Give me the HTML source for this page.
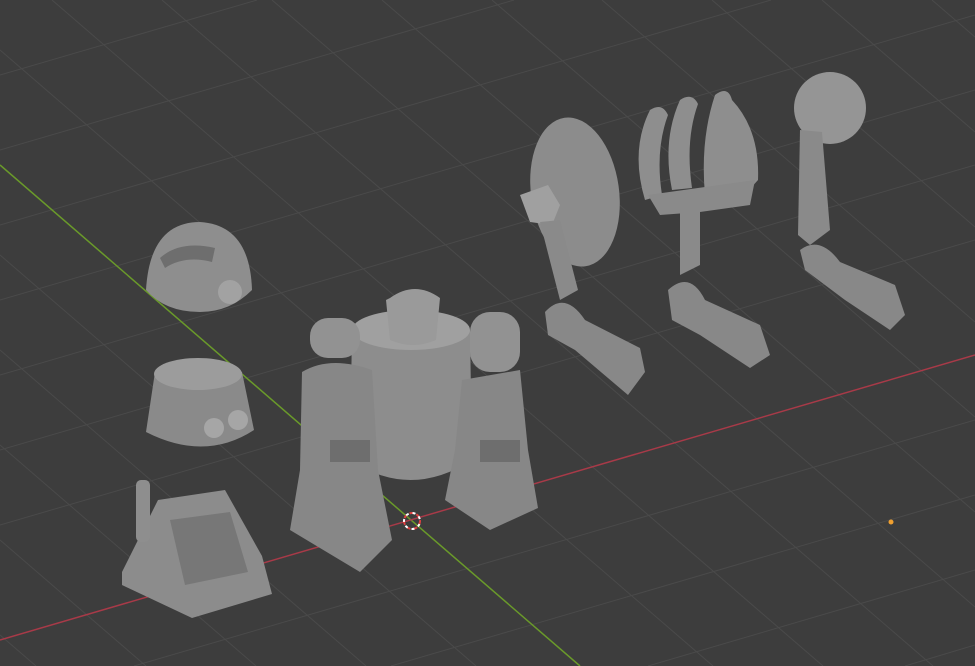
<!DOCTYPE html>
<html><head><meta charset="utf-8"><style>
html,body{margin:0;padding:0;background:#3d3d3d;overflow:hidden;width:975px;height:666px}
svg{display:block}
</style></head><body>
<svg width="975" height="666" viewBox="0 0 975 666" xmlns="http://www.w3.org/2000/svg">
<rect width="975" height="666" fill="#3d3d3d"/>
<g stroke="#4a4a4a" stroke-width="1">
<line x1="932" y1="0" x2="975" y2="37"/>
<line x1="822" y1="0" x2="975" y2="132"/>
<line x1="712" y1="0" x2="975" y2="227"/>
<line x1="602" y1="0" x2="975" y2="322"/>
<line x1="492" y1="0" x2="975" y2="417"/>
<line x1="382" y1="0" x2="975" y2="512"/>
<line x1="272" y1="0" x2="975" y2="607"/>
<line x1="162" y1="0" x2="933" y2="666"/>
<line x1="52" y1="0" x2="823" y2="666"/>
<line x1="0" y1="50" x2="713" y2="666"/>
<line x1="0" y1="255" x2="476" y2="666"/>
<line x1="0" y1="350" x2="366" y2="666"/>
<line x1="0" y1="445" x2="256" y2="666"/>
<line x1="0" y1="540" x2="146" y2="666"/>
<line x1="0" y1="635" x2="36" y2="666"/>
<line x1="0" y1="75" x2="257" y2="0"/>
<line x1="0" y1="150" x2="514" y2="0"/>
<line x1="0" y1="225" x2="771" y2="0"/>
<line x1="0" y1="300" x2="975" y2="15"/>
<line x1="0" y1="375" x2="975" y2="90"/>
<line x1="0" y1="450" x2="975" y2="165"/>
<line x1="0" y1="525" x2="975" y2="240"/>
<line x1="134" y1="666" x2="975" y2="420"/>
<line x1="391" y1="666" x2="975" y2="495"/>
<line x1="648" y1="666" x2="975" y2="570"/>
<line x1="905" y1="666" x2="975" y2="645"/>
</g>
<line x1="0" y1="165" x2="580" y2="666" stroke="#6a9a2a" stroke-width="1.5"/>
<line x1="0" y1="640" x2="975" y2="355" stroke="#a83a48" stroke-width="1.5"/>

<path d="M146 290 Q150 222 200 222 Q250 225 252 290 Q230 312 200 312 Q165 312 146 290Z" fill="#8e8e8e"/>
<path d="M160 258 Q180 240 215 248 L212 262 Q185 255 165 268Z" fill="#6e6e6e"/>
<circle cx="230" cy="292" r="12" fill="#a2a2a2"/>
<path d="M155 372 Q200 348 242 372 L254 430 Q205 462 146 432Z" fill="#8a8a8a"/>
<ellipse cx="198" cy="374" rx="44" ry="16" fill="#9c9c9c"/>
<circle cx="214" cy="428" r="10" fill="#a6a6a6"/>
<circle cx="238" cy="420" r="10" fill="#a6a6a6"/>
<path d="M122 572 L158 500 L225 490 L262 556 L272 594 L192 618 L122 585Z" fill="#8c8c8c"/>
<path d="M170 520 L230 512 L248 572 L185 585Z" fill="#777"/>
<rect x="136" y="480" width="14" height="62" rx="5" fill="#8e8e8e"/>
<path d="M352 330 Q410 300 470 330 L472 460 Q410 500 350 460Z" fill="#8d8d8d"/>
<ellipse cx="411" cy="330" rx="59" ry="20" fill="#a0a0a0"/>
<path d="M386 300 L390 298 Q415 280 440 298 L436 340 Q413 350 390 340Z" fill="#9a9a9a"/>
<rect x="310" y="318" width="50" height="40" rx="18" fill="#929292"/>
<rect x="470" y="312" width="50" height="60" rx="20" fill="#929292"/>
<path d="M302 372 Q330 355 372 370 L378 470 L392 540 L360 572 L290 530 L300 470Z" fill="#878787"/>
<path d="M462 380 L520 370 L528 450 L538 508 L490 530 L445 500 L455 450Z" fill="#878787"/>
<rect x="330" y="440" width="40" height="22" fill="#6e6e6e"/>
<rect x="480" y="440" width="40" height="22" fill="#6e6e6e"/>
<ellipse cx="575" cy="192" rx="44" ry="75" fill="#8c8c8c" transform="rotate(-8 575 192)"/>
<path d="M520 195 L548 185 L560 205 L552 225 L530 222Z" fill="#a0a0a0"/>
<path d="M540 222 L560 220 L578 290 L560 300Z" fill="#8a8a8a"/>
<path d="M545 312 Q565 290 585 320 L640 348 L645 372 L628 395 L575 350 L548 335Z" fill="#888"/>
<path d="M645 200 Q630 150 650 110 Q662 102 668 115 Q655 150 662 195Z" fill="#8e8e8e"/>
<path d="M672 190 Q662 140 680 100 Q692 92 698 104 Q685 140 692 188Z" fill="#8e8e8e"/>
<path d="M705 195 Q700 140 715 95 Q728 85 732 100 Q760 130 758 180 L740 200Z" fill="#8e8e8e"/>
<path d="M648 195 L755 180 L750 205 L700 212 L660 215Z" fill="#8a8a8a"/>
<path d="M680 200 L700 205 L700 265 L680 275Z" fill="#8a8a8a"/>
<path d="M668 290 Q690 270 705 300 L760 325 L770 355 L750 368 L700 335 L672 320Z" fill="#888"/>
<circle cx="830" cy="108" r="36" fill="#959595"/>
<path d="M800 130 L822 132 L830 230 L810 245 L798 235Z" fill="#8a8a8a"/>
<path d="M800 250 Q820 235 840 262 L895 285 L905 315 L890 330 L845 300 L805 270Z" fill="#888"/>
<circle cx="412" cy="521" r="8" fill="none" stroke="#e04040" stroke-width="2" stroke-dasharray="4 3"/>
<circle cx="412" cy="521" r="8" fill="none" stroke="#fff" stroke-width="2" stroke-dasharray="3 4" stroke-dashoffset="4"/>
<circle cx="891" cy="522" r="2.5" fill="#f0a030"/>
</svg>
</body></html>
